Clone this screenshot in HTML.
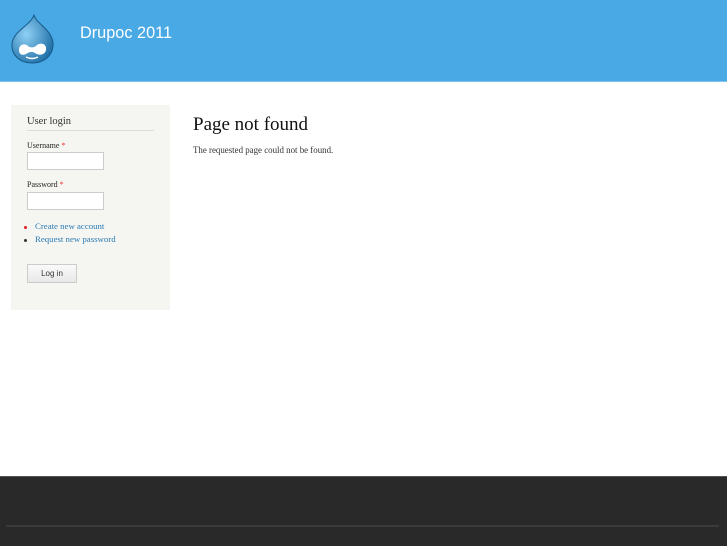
<!DOCTYPE html>
<html><head><style>
body{margin:0;width:727px;height:545px;position:relative;background:#fff;font-family:"Liberation Serif",serif;overflow:hidden}
.hdr{position:absolute;left:0;top:0;width:727px;height:81px;background:#48a9e4;border-bottom:1px solid #7fc3ee}
.title{position:absolute;left:80px;top:24px;color:#fff;font-family:"Liberation Sans",sans-serif;font-size:16.3px}
.side{position:absolute;left:11px;top:105px;width:159px;height:205px;background:#f5f5f1}
.side h2{position:absolute;left:16px;top:11px;margin:0;font-weight:normal;font-size:10.5px;color:#333;width:127px;border-bottom:1px solid #ddd;padding-bottom:3px}
.lbl{position:absolute;left:16px;font-size:8px;color:#222}
.lbl span{color:#e33}
.inp{position:absolute;left:16px;width:75px;height:16px;border:1px solid #ccc;background:#fff}
.lnk{position:absolute;left:24px;font-size:8.8px;color:#2a7bb5}
.dot{position:absolute;left:13px;width:3px;height:3px;border-radius:50%}
.btn{position:absolute;left:16px;top:159px;width:48px;height:17px;border:1px solid #ccc;background:linear-gradient(#fafafa,#e8e8e8);font-family:"Liberation Sans",sans-serif;font-size:8px;text-align:center;line-height:17px;color:#333}
h1{position:absolute;left:193px;top:114px;margin:0;font-weight:normal;font-size:19px;color:#111}
p{position:absolute;left:193px;top:145px;margin:0;font-size:8.9px;color:#333}
.ftr{position:absolute;left:0;top:476px;width:727px;height:69px;background:#292929;border-top:1px solid #555}
.ftr div{position:absolute;left:6px;top:48px;width:713px;height:2px;background:#3a3a3a}
</style></head><body>
<div class="hdr">
<svg style="position:absolute;left:10px;top:14px" width="45" height="50" viewBox="0 0 45 50">
<defs><radialGradient id="g" cx="0.35" cy="0.4" r="0.7"><stop offset="0" stop-color="#8fd0f5"/><stop offset="1" stop-color="#1f6fa6"/></radialGradient></defs>
<path d="M24 1C26 10 44 16 43 32C42 43 33 49 22 49C10 49 1 41 2 30C3 17 20 12 24 1Z" fill="url(#g)" stroke="#175a8a" stroke-width="1"/>
<path d="M9 36C9 30 15 29 18 32C20 34 24 34 27 31C31 28 37 30 36 36C35 41 29 42 25 39C22 37 19 38 16 40C12 42 9 40 9 36Z" fill="#fff"/>
<path d="M16 43Q22 46 28 43" stroke="#fff" stroke-width="1.5" fill="none"/>
</svg>
<div class="title">Drupoc 2011</div>
</div>
<div class="side">
<h2>User login</h2>
<div class="lbl" style="top:36px">Username <span>*</span></div>
<div class="inp" style="top:47px"></div>
<div class="lbl" style="top:75px">Password <span>*</span></div>
<div class="inp" style="top:87px"></div>
<div class="dot" style="top:121px;background:#d22"></div>
<div class="lnk" style="top:116px">Create new account</div>
<div class="dot" style="top:134px;background:#333"></div>
<div class="lnk" style="top:129px">Request new password</div>
<div class="btn">Log in</div>
</div>
<h1>Page not found</h1>
<p>The requested page could not be found.</p>
<div class="ftr"><div></div></div>
</body></html>
